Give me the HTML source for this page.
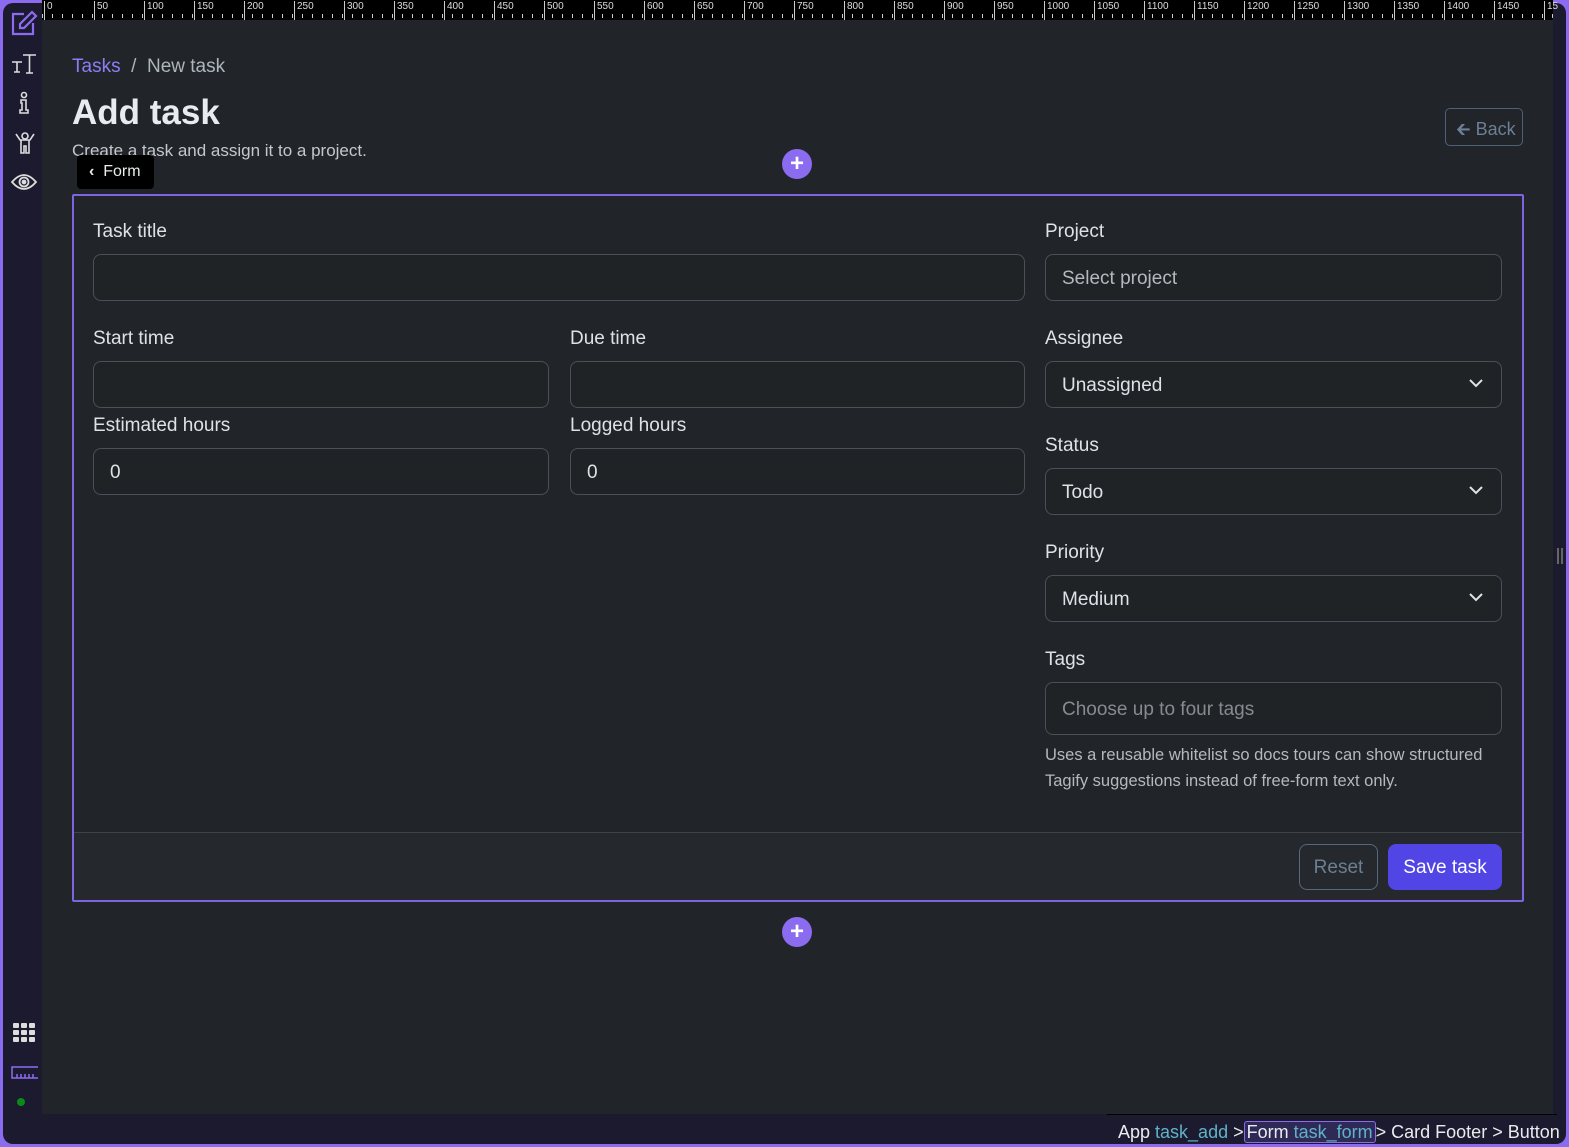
<!DOCTYPE html>
<html><head><meta charset="utf-8"><style>
*{box-sizing:border-box;margin:0;padding:0}
body{width:1569px;height:1147px;background:#8b6cf0;font-family:"Liberation Sans",sans-serif;overflow:hidden;position:relative}
.frame{position:absolute;left:3px;top:3px;right:3px;bottom:3px;background:#1c1a2e;border-radius:10px;overflow:hidden}
.main{position:absolute;left:42px;top:20px;width:1511px;height:1094px;background:#212529}
.ruler{position:absolute;left:42px;top:0;width:1511px;height:20px;background:#000;
 background-image:repeating-linear-gradient(90deg,#ccc 0 1px,transparent 1px 10px);background-size:100% 4px;background-repeat:no-repeat;background-position:0 14px}
.ruler span{position:absolute;top:1px;font-size:10px;color:#ddd;border-left:1px solid #ccc;padding-left:2px;height:19px;line-height:12px}
.side svg{position:absolute;left:10px}
.abs{position:absolute}
.lbl{position:absolute;color:#dee2e6;font-size:19px}
.inp{position:absolute;height:47px;border:1px solid #495057;border-radius:8px;background:#1f2326;color:#dee2e6;font-size:19px;padding:13px 16px;line-height:22px}
.chev{position:absolute;right:18px;top:16px}
</style></head><body>
<div class="frame"></div>
<div class="ruler">
<span style="left:2px">0</span><span style="left:52px">50</span><span style="left:102px">100</span><span style="left:152px">150</span><span style="left:202px">200</span><span style="left:252px">250</span><span style="left:302px">300</span><span style="left:352px">350</span><span style="left:402px">400</span><span style="left:452px">450</span><span style="left:502px">500</span><span style="left:552px">550</span><span style="left:602px">600</span><span style="left:652px">650</span><span style="left:702px">700</span><span style="left:752px">750</span><span style="left:802px">800</span><span style="left:852px">850</span><span style="left:902px">900</span><span style="left:952px">950</span><span style="left:1002px">1000</span><span style="left:1052px">1050</span><span style="left:1102px">1100</span><span style="left:1152px">1150</span><span style="left:1202px">1200</span><span style="left:1252px">1250</span><span style="left:1302px">1300</span><span style="left:1352px">1350</span><span style="left:1402px">1400</span><span style="left:1452px">1450</span><span style="left:1502px">15</span>
</div>
<div class="main"></div>
<div class="side">
<svg style="top:10px" width="28" height="26" viewBox="0 0 28 26" fill="none" stroke="#8b6cf0" stroke-width="2.2"><path d="M14 4H3v20h20V13"/><path d="M22 2l4 4-12 12H10v-4z"/></svg>
<svg style="top:52px" width="28" height="24" viewBox="0 0 28 24" fill="none" stroke="#ddd" stroke-width="1.6"><path d="M2 10h10M7 10v10M4 20h6M13 3h13M19.5 3v18M16 21h7"/></svg>
<svg style="top:91px;left:17px" width="14" height="24" viewBox="0 0 14 24" fill="none" stroke="#ddd" stroke-width="1.6"><circle cx="7" cy="4" r="2.5"/><path d="M4 9h5v10h2v3H3v-3h2v-7H4z"/></svg>
<svg style="top:131px;left:14px" width="22" height="24" viewBox="0 0 22 24" fill="none" stroke="#ddd" stroke-width="1.6"><circle cx="11" cy="5" r="3"/><path d="M2 3l4 6h10l4-6M7 9v13h3v-7h2v7h3V9"/></svg>
<svg style="top:172px" width="28" height="20" viewBox="0 0 28 20" fill="none" stroke="#ddd" stroke-width="1.8"><path d="M2 10Q14-4 26 10Q14 24 2 10z"/><circle cx="14" cy="10" r="4.5"/><circle cx="14" cy="10" r="1.5" fill="#ddd"/></svg>
<svg style="top:1023px;left:13px" width="24" height="20" viewBox="0 0 24 20" fill="#ddd"><rect x="0" y="0" width="6" height="5" rx="1"/><rect x="8" y="0" width="6" height="5" rx="1"/><rect x="16" y="0" width="6" height="5" rx="1"/><rect x="0" y="7" width="6" height="5" rx="1"/><rect x="8" y="7" width="6" height="5" rx="1"/><rect x="16" y="7" width="6" height="5" rx="1"/><rect x="0" y="14" width="6" height="5" rx="1"/><rect x="8" y="14" width="6" height="5" rx="1"/><rect x="16" y="14" width="6" height="5" rx="1"/></svg>
<svg style="top:1066px;left:11px" width="27" height="14" viewBox="0 0 27 14" fill="none" stroke="#8b6cf0" stroke-width="1.5"><path d="M27 1H1v11h26M6 12V8M10 12V8M14 12V8M18 12V8M22 12V8"/></svg>
<div class="abs" style="left:17px;top:1098px;width:8px;height:8px;border-radius:50%;background:#0a8a1a"></div>
</div>
<div class="abs" style="left:1557px;top:548px;width:2px;height:16px;background:#666;box-shadow:4px 0 0 #666"></div>

<div class="abs" style="left:72px;top:56px;font-size:19px;color:#8f7cf5">Tasks <span style="color:#adb5bd">&nbsp;/&nbsp; New task</span></div>
<div class="abs" style="left:72px;top:93px;font-size:35px;font-weight:bold;color:#e9ecef">Add task</div>
<div class="abs" style="left:72px;top:141px;font-size:17px;color:#c4c8cc">Create a task and assign it to a project.</div>
<div class="abs" style="left:1445px;top:108px;width:78px;height:38px;border:1px solid #4d6178;border-radius:5px;color:#6c7f94;font-size:18px;padding:8px 0 0 10px">&#129136; Back</div>
<div class="abs" style="left:77px;top:155px;width:77px;height:34px;background:#000;border-radius:4px;color:#e9ecef;font-size:16px;padding:8px 0 0 12px"><b style="font-weight:bold">&#8249;</b>&nbsp; Form</div>
<div class="abs" style="left:782px;top:149px;width:30px;height:30px;border-radius:50%;background:#8b6cf0;color:#fff;font-size:24px;line-height:29px;text-align:center;font-weight:bold">+</div>
<div class="abs" style="left:782px;top:917px;width:30px;height:30px;border-radius:50%;background:#8b6cf0;color:#fff;font-size:24px;line-height:29px;text-align:center;font-weight:bold">+</div>

<div class="abs" style="left:72px;top:194px;width:1452px;height:708px;border:2px solid #7d64e0;border-radius:2px"></div>
<div class="abs" style="left:74px;top:832px;width:1448px;height:68px;background:#25282c;border-top:1px solid #3e4349"></div>

<div class="lbl" style="left:93px;top:221px">Task title</div>
<div class="inp" style="left:93px;top:254px;width:932px"></div>
<div class="lbl" style="left:93px;top:328px">Start time</div>
<div class="inp" style="left:93px;top:361px;width:456px"></div>
<div class="lbl" style="left:570px;top:328px">Due time</div>
<div class="inp" style="left:570px;top:361px;width:455px"></div>
<div class="lbl" style="left:93px;top:415px">Estimated hours</div>
<div class="inp" style="left:93px;top:448px;width:456px">0</div>
<div class="lbl" style="left:570px;top:415px">Logged hours</div>
<div class="inp" style="left:570px;top:448px;width:455px">0</div>

<div class="lbl" style="left:1045px;top:221px">Project</div>
<div class="inp" style="left:1045px;top:254px;width:457px;color:#b5b9bd">Select project</div>
<div class="lbl" style="left:1045px;top:328px">Assignee</div>
<div class="inp" style="left:1045px;top:361px;width:457px">Unassigned<svg class="chev" width="14" height="10" viewBox="0 0 14 10" fill="none" stroke="#dee2e6" stroke-width="2"><path d="M1 2l6 6 6-6"/></svg></div>
<div class="lbl" style="left:1045px;top:435px">Status</div>
<div class="inp" style="left:1045px;top:468px;width:457px">Todo<svg class="chev" width="14" height="10" viewBox="0 0 14 10" fill="none" stroke="#dee2e6" stroke-width="2"><path d="M1 2l6 6 6-6"/></svg></div>
<div class="lbl" style="left:1045px;top:542px">Priority</div>
<div class="inp" style="left:1045px;top:575px;width:457px">Medium<svg class="chev" width="14" height="10" viewBox="0 0 14 10" fill="none" stroke="#dee2e6" stroke-width="2"><path d="M1 2l6 6 6-6"/></svg></div>
<div class="lbl" style="left:1045px;top:649px">Tags</div>
<div class="inp" style="left:1045px;top:682px;width:457px;height:53px;padding-top:16px;color:#868b90">Choose up to four tags</div>
<div class="abs" style="left:1045px;top:742px;width:470px;font-size:16.5px;line-height:26px;color:#b5b9bd">Uses a reusable whitelist so docs tours can show structured Tagify suggestions instead of free-form text only.</div>

<div class="abs" style="left:1299px;top:844px;width:79px;height:46px;border:1px solid #56687a;border-radius:8px;color:#6c7f94;font-size:19px;text-align:center;line-height:46px">Reset</div>
<div class="abs" style="left:1388px;top:844px;width:114px;height:46px;background:#5146e5;border-radius:8px;color:#fff;font-size:19px;text-align:center;line-height:48px">Save task</div>

<div class="abs" style="left:1107px;top:1114px;width:450px;height:30px;background:#1c1a2e;border-top:1px solid #000"></div>
<div class="abs" style="left:1118px;top:1122px;font-size:18px;color:#e9ecef;white-space:nowrap">App <span style="color:#5fb3c9">task_add</span> &gt;<span style="border:1px solid #8b6cf0;border-radius:3px;background:#2e2a55;padding:0 2px">Form <span style="color:#5fb3c9">task_form</span></span>&gt; Card Footer &gt; Button</div>
</body></html>
